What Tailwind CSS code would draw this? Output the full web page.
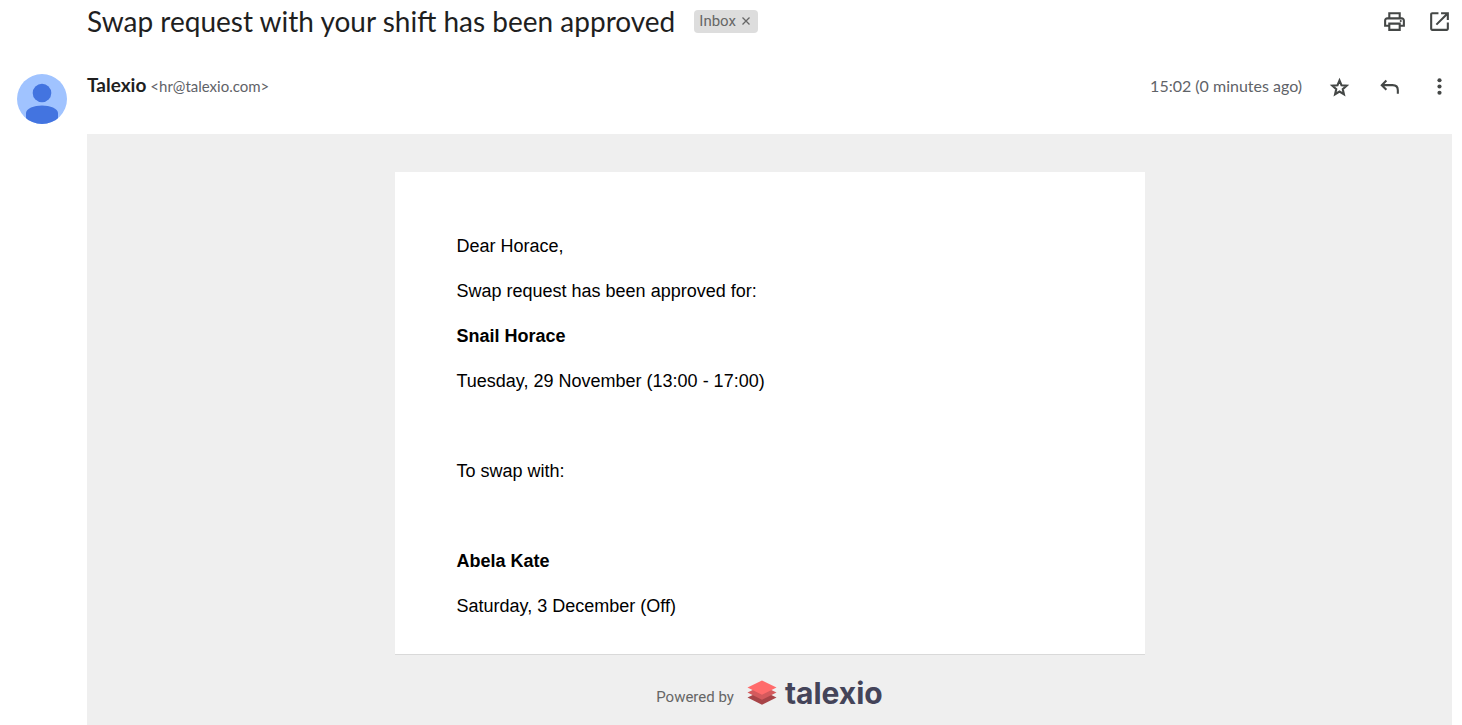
<!DOCTYPE html>
<html lang="en">
<head>
<meta charset="utf-8">
<meta name="viewport" content="width=device-width, initial-scale=1">
<title>Swap request with your shift has been approved</title>
<script src="https://cdn.jsdelivr.net/npm/@tailwindcss/browser@4"></script>
</head>
<body class="flex min-h-screen flex-col bg-white font-['Lato','Liberation_Sans',sans-serif] text-[#5f6368]">
  <header class="flex h-[42px] items-center pr-[10px] pl-[87px]">
    <h1 class="text-[28px] leading-9 text-[#1f1f1f]">Swap request with your shift has been approved</h1>
    <div class="ml-[19px] flex h-[23px] items-center gap-1 rounded bg-[#ddd] px-[5px] font-['Roboto',sans-serif] text-[15px] text-[#666]">
      <span>Inbox</span>
      <button type="button" aria-label="Remove label Inbox" class="flex h-4 w-[13px] items-center justify-center">
        <svg class="size-2" viewBox="0 0 8 8" fill="none" stroke="#666" stroke-width="1.300"><path d="M.5.5l7 7M7.500.5l-7 7"/></svg>
      </button>
    </div>
    <div class="ml-auto flex gap-5 text-[#444746]">
      <button type="button" aria-label="Print all">
        <svg class="size-[25px]" viewBox="0 0 24 24" fill="currentColor"><path d="M19 8h-1V3H6v5H5c-1.660 0-3 1.340-3 3v6h4v4h12v-4h4v-6c0-1.660-1.340-3-3-3zM8 5h8v3H8V5zm8 12v2H8v-4h8v2zm2-2v-2H6v2H4v-4c0-.550.450-1 1-1h14c.550 0 1 .450 1 1v4h-2z"/><circle cx="18" cy="11.500" r="1"/></svg>
      </button>
      <button type="button" aria-label="In new window">
        <svg class="size-[25px]" viewBox="0 0 24 24" fill="currentColor"><path d="M11 3v2H5v14h14v-6h2v6c0 1.100-.900 2-2 2H5c-1.100 0-2-.900-2-2V5c0-1.100.900-2 2-2h6zM13.500 3v2h4.090l-9.300 9.300 1.410 1.410L19 6.410V10.500h2V3h-7.500z"/></svg>
      </button>
    </div>
  </header>

  <section class="flex h-[92px] items-start pt-8 pr-[10px] pl-[17px]">
    <svg class="mr-5 size-[50px] shrink-0" viewBox="0 0 50 50" role="img" aria-label="Talexio">
      <clipPath id="disc"><circle cx="25" cy="25" r="25"/></clipPath>
      <g clip-path="url(#disc)"><rect width="50" height="50" fill="#a0c3ff"/><circle cx="25" cy="19" r="9.300" fill="#4374e0"/><path d="M9 50V39c0-4.500 8-7.500 16-7.500s16 3 16 7.500v11z" fill="#4374e0"/></g>
    </svg>
    <div class="flex items-baseline gap-1 leading-[22px]">
      <h2 class="text-[19px] font-bold text-[#1f1f1f]">Talexio</h2>
      <span class="text-[15px]">&lt;hr@talexio.com&gt;</span>
    </div>
    <div class="ml-auto flex items-start">
      <time class="mr-[25px] text-[16px] leading-6">15:02 (0 minutes ago)</time>
      <div class="flex gap-[25px] text-[#444746]">
        <button type="button" aria-label="Star"><svg class="size-[25px]" viewBox="0 0 24 24" fill="none" stroke="currentColor" stroke-width="2"><path d="M12 6.200l1.900 4.600 5 .400-3.800 3.300 1.150 4.900L12 16.800l-4.250 2.600 1.150-4.900L5.100 11.200l5-.400z"/></svg></button>
        <button type="button" aria-label="Reply"><svg class="size-[25px]" viewBox="0 0 24 24" fill="none" stroke="currentColor" stroke-width="2"><path d="M9 6.300L4.600 10.700 9 15.100M4.600 10.700H15c3 0 5 2 5 5V19"/></svg></button>
        <button type="button" aria-label="More"><svg class="size-[25px]" viewBox="0 0 24 24" fill="currentColor"><circle cx="12" cy="6" r="2"/><circle cx="12" cy="12" r="2"/><circle cx="12" cy="18" r="2"/></svg></button>
      </div>
    </div>
  </section>

  <main class="mr-[10px] ml-[87px] flex grow flex-col items-center bg-[#efefef] pt-[38px]">
    <article class="flex w-full max-w-[750px] flex-col gap-[18px] border-b border-[#d9d9d9] bg-white px-[62px] pt-[61px] pb-[34px] font-['Liberation_Sans',Arial,sans-serif] text-[18px] leading-[27px] text-black">
      <p>Dear Horace,</p>
      <p>Swap request has been approved for:</p>
      <p class="font-bold">Snail Horace</p>
      <p>Tuesday, 29 November (13:00 - 17:00)</p>
      <p class="my-[45px]">To swap with:</p>
      <p class="font-bold">Abela Kate</p>
      <p>Saturday, 3 December (Off)</p>
    </article>
    <footer class="flex items-center pt-[22px]">
      <span class="pt-2 font-['Roboto',sans-serif] text-[15px] leading-6 text-[#666]">Powered by</span>
      <a href="#" aria-label="talexio" class="ml-[13px] flex items-center gap-2">
        <svg class="h-[26px] w-[30px]" viewBox="0 0 30 26"><path d="M.500 17.500L15 10.500l14.500 7L15 24.800z" fill="#a84448"/><path d="M.500 12.500L15 5.500l14.500 7L15 19.800z" fill="#d45a5d"/><path d="M.500 7.500L15 .500l14.500 7L15 14.800z" fill="#ff6b6b"/></svg>
        <span class="font-['Inter',sans-serif] text-[30px] leading-8 font-bold text-[#444459]">talexio</span>
      </a>
    </footer>
  </main>
</body>
</html>
